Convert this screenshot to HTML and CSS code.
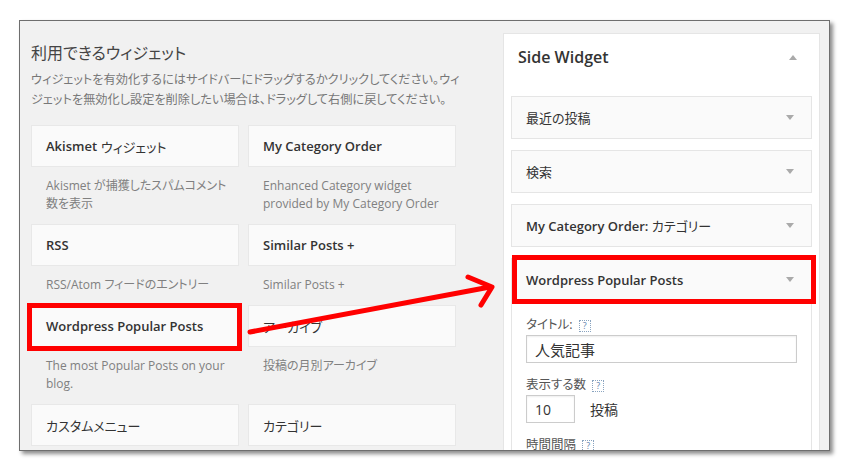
FILE: index.html
```
<!DOCTYPE html>
<html lang="ja">

<head>
    <meta charset="UTF-8">
    <title>ウィジェット</title>
    <link rel="stylesheet" href="styles.css">
</head>

<body>

    <div class="screen">
        <!-- available widgets -->
        <div class="available">
            <h2>利用できるウィジェット</h2>
            <p class="intro">ウィジェットを有効化するにはサイドバーにドラッグするかクリックしてください。ウィ<br>ジェットを無効化し設定を削除したい場合は、ドラッグして右側に戻してください。</p>

            <div class="widget-grid">
                <div class="widget">
                    <div class="card">Akismet <span class="ja">ウィジェット</span></div>
                    <div class="desc">Akismet が捕獲したスパムコメント<br>数を表示</div>
                </div>
                <div class="widget">
                    <div class="card">My Category Order</div>
                    <div class="desc">Enhanced Category widget<br>provided by My Category Order</div>
                </div>
                <div class="widget">
                    <div class="card">RSS</div>
                    <div class="desc">RSS/Atom フィードのエントリー</div>
                </div>
                <div class="widget">
                    <div class="card">Similar Posts +</div>
                    <div class="desc">Similar Posts +</div>
                </div>
                <div class="widget">
                    <div class="card">Wordpress Popular Posts</div>
                    <div class="desc">The most Popular Posts on your<br>blog.</div>
                </div>
                <div class="widget">
                    <div class="card ja-title">アーカイブ</div>
                    <div class="desc">投稿の月別アーカイブ</div>
                </div>
                <div class="widget">
                    <div class="card ja-title">カスタムメニュー</div>
                </div>
                <div class="widget">
                    <div class="card ja-title">カテゴリー</div>
                </div>
            </div>
        </div>

        <!-- sidebar -->
        <div class="sidebar">
            <div class="sidebar-head">
                <h3>Side Widget</h3>
                <span class="tri-up"></span>
            </div>
            <div class="sidebar-list">
                <div class="s-widget">
                    <span class="ja-title">最近の投稿</span>
                    <span class="tri-down"></span>
                </div>
                <div class="s-widget">
                    <span class="ja-title">検索</span>
                    <span class="tri-down"></span>
                </div>
                <div class="s-widget">
                    <span><b>My Category Order:</b> <span class="ja-title">カテゴリー</span></span>
                    <span class="tri-down"></span>
                </div>
                <div class="s-open">
                    <div class="s-widget">
                        <b>Wordpress Popular Posts</b>
                        <span class="tri-down"></span>
                    </div>
                    <div class="s-body">
                        <label>タイトル: <span class="help">?</span></label>
                        <div class="field wide">人気記事</div>
                        <label class="gap">表示する数 <span class="help">?</span></label>
                        <div class="row">
                            <div class="field small">10</div>
                            <span class="unit">投稿</span>
                        </div>
                        <label class="gap">時間間隔 <span class="help">?</span></label>
                    </div>
                </div>
            </div>
        </div>
    </div>

    <!-- annotations drawn on top of the screenshot -->
    <span class="mark mark-left"></span>
    <span class="mark mark-right"></span>
    <svg class="arrow" width="866" height="474" viewBox="0 0 866 474">
        <line x1="250" y1="332" x2="490" y2="287" stroke="#f00" stroke-width="5" stroke-linecap="round" />
        <polyline points="468,277 492,287 481,305" fill="none" stroke="#f00" stroke-width="5" stroke-linecap="round" stroke-linejoin="round" />
    </svg>

</body>

</html>
```

FILE: styles.css
```
body {
    margin: 0;
    background-color: #fff;
    font-family: "Open Sans", "Noto Sans CJK JP", sans-serif;
    color: #333;
    position: relative;
    width: 866px;
    height: 474px;
    overflow: hidden;
}

.screen {
    margin: 20px 0 0 19px;
    width: 811px;
    height: 431px;
    box-sizing: border-box;
    border: 1px solid #6e6e6e;
    background-color: #f1f1f1;
    box-shadow: 3px 3px 4px rgba(0, 0, 0, 0.45);
    overflow: hidden;
    display: flex;
    align-items: flex-start;
}

.ja,
.ja-title,
.intro,
.desc,
label,
.unit {
    font-feature-settings: "palt";
}

/* left column */
.available {
    width: 425px;
    padding: 21px 0 0 11px;
}

.available h2 {
    margin: 0;
    font-size: 16px;
    line-height: 22px;
    font-weight: normal;
    color: #444;
    font-feature-settings: "palt";
}

.intro {
    margin: 6px 0 15px;
    font-size: 12.2px;
    line-height: 20px;
    color: #777;
    white-space: nowrap;
}

.widget-grid {
    display: grid;
    grid-template-columns: 208px 208px;
    column-gap: 9px;
}

.card {
    height: 42px;
    box-sizing: border-box;
    border: 1px solid #e8e8e8;
    background-color: #fafafa;
    display: flex;
    align-items: center;
    padding-left: 14px;
    font-size: 13px;
    font-weight: 600;
    color: #333;
}

.card .ja {
    font-weight: normal;
    margin-left: 4px;
}

.card.ja-title {
    font-weight: normal;
}

.desc {
    padding: 10px 15px 11px;
    font-size: 12px;
    line-height: 18px;
    color: #808080;
    white-space: nowrap;
}

/* right column */
.sidebar {
    width: 317px;
    margin: 12px 0 0 47px;
    box-sizing: border-box;
    border: 1px solid #e5e5e5;
    background-color: #fff;
    height: 440px;
}

.sidebar-head {
    display: flex;
    justify-content: space-between;
    align-items: center;
    padding: 12px 22px 0 14px;
    margin-bottom: 28px;
}

.sidebar-head h3 {
    margin: 0;
    font-size: 16px;
    line-height: 22px;
    font-weight: 600;
    color: #333;
}

.tri-up {
    width: 0;
    height: 0;
    border-left: 4px solid transparent;
    border-right: 4px solid transparent;
    border-bottom: 5px solid #aaa;
}

.tri-down {
    width: 0;
    height: 0;
    border-left: 4px solid transparent;
    border-right: 4px solid transparent;
    border-top: 5px solid #aaa;
}

.sidebar-list {
    padding: 0 7px;
}

.s-widget {
    height: 43px;
    box-sizing: border-box;
    border: 1px solid #e5e5e5;
    background-color: #fafafa;
    display: flex;
    justify-content: space-between;
    align-items: center;
    padding: 0 17px 0 14px;
    margin-bottom: 11px;
    font-size: 13px;
    color: #333;
}

.s-widget b {
    font-weight: 600;
}

.s-open .s-widget {
    margin-bottom: 0;
}

.s-body {
    border: 1px solid #e5e5e5;
    border-top: none;
    background-color: #fff;
    padding: 15px 14px 20px;
}

.s-body label {
    display: block;
    font-size: 12.5px;
    line-height: 18px;
    color: #555;
}

.s-body label.gap {
    margin-top: 13px;
}

.help {
    display: inline-block;
    width: 10px;
    height: 10px;
    line-height: 10px;
    border: 1px dotted #8aa4c0;
    font-size: 9px;
    text-align: center;
    color: #5f82ad;
    vertical-align: 0;
    margin-left: 3px;
}

.field {
    margin-top: 1px;
    height: 28px;
    box-sizing: border-box;
    border: 1px solid #ccc;
    background-color: #fff;
    box-shadow: inset 0 1px 2px rgba(0, 0, 0, 0.07);
    display: flex;
    align-items: center;
    padding-left: 8px;
    font-size: 15px;
    color: #333;
}

.field.wide {
    width: 271px;
}

.row {
    display: flex;
    align-items: center;
}

.field.small {
    width: 49px;
    font-size: 14px;
}

.unit {
    margin-left: 15px;
    font-size: 14px;
    color: #333;
}

/* red annotations */
.mark {
    position: absolute;
    box-sizing: border-box;
    border: 5px solid #f00;
}

.mark-left {
    left: 27px;
    top: 303px;
    width: 215px;
    height: 48px;
}

.mark-right {
    left: 512px;
    top: 255px;
    width: 304px;
    height: 49px;
}

.arrow {
    position: absolute;
    left: 0;
    top: 0;
}
```
